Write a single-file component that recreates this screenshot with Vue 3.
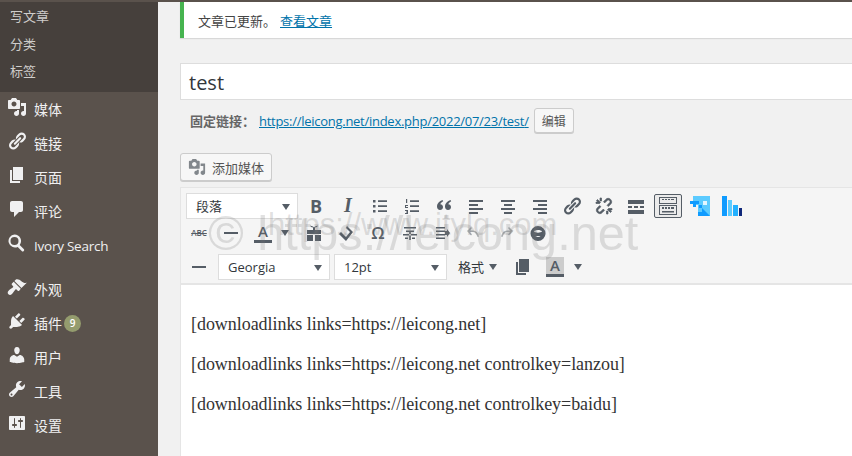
<script setup>
const subItems = ['写文章', '分类', '标签']

const menuTop = [
  { label: '媒体', d: 'M13 11V4c0-.55-.45-1-1-1h-1.67L9 1H5L3.67 3H2c-.55 0-1 .45-1 1v7c0 .55.45 1 1 1h10c.55 0 1-.45 1-1zM7 4.5c1.38 0 2.5 1.12 2.5 2.5S8.38 9.5 7 9.5 4.5 8.38 4.5 7 5.62 4.5 7 4.5zM14 6h5v10.5c0 1.38-1.12 2.5-2.5 2.5S14 17.88 14 16.5s1.12-2.5 2.5-2.5c.17 0 .34.02.5.05V9h-3V6zm-4 8.05V13h2v3.5c0 1.38-1.12 2.5-2.5 2.5S7 17.88 7 16.5 8.12 14 9.5 14c.17 0 .34.02.5.05z' },
  { label: '链接', d: 'M17.74 2.76c1.68 1.69 1.68 4.41 0 6.1l-1.53 1.52c-1.12 1.12-2.7 1.47-4.14 1.09l2.62-2.61.76-.77.76-.76c.84-.84.84-2.2 0-3.04-.84-.85-2.2-.85-3.04 0l-.77.76-3.38 3.38c-.37-1.44-.02-3.02 1.1-4.14l1.52-1.53c1.69-1.68 4.42-1.68 6.1 0zM8.59 13.43l5.34-5.34c.42-.42.42-1.1 0-1.52-.44-.43-1.13-.39-1.53 0l-5.33 5.34c-.42.42-.42 1.1 0 1.52.44.43 1.13.39 1.52 0zm-.76 2.29l4.14-4.15c.38 1.44.03 3.02-1.09 4.14l-1.52 1.53c-1.69 1.68-4.41 1.68-6.1 0-1.68-1.68-1.68-4.42 0-6.1l1.53-1.52c1.12-1.12 2.7-1.47 4.14-1.1l-4.14 4.15c-.85.84-.85 2.2 0 3.05.84.84 2.2.84 3.04 0z' },
  { label: '页面', d: 'M6 15V2h10v13H6zm-1 1h8v2H3V5h2v11z' },
  { label: '评论', d: 'M5 2h9c1.1 0 2 .9 2 2v7c0 1.1-.9 2-2 2h-2l-5 5v-5H5c-1.1 0-2-.9-2-2V4c0-1.1.9-2 2-2z' },
  { label: 'Ivory Search', cls: 'latin', d: 'M7.5 1.5a6.5 6.500 0 0 1 5.200 10.400l4 4a1.400 1.400 0 0 1-2 2l-4-4A6.500 6.500 0 1 1 7.500 1.500zM7.500 4a4 4 0 1 0 0 8 4 4 0 0 0 0-8z' }
]

const menuBottom = [
  { label: '外观', d: 'M14.48 11.06L7.41 3.99l1.5-1.5c.5-.56 2.3-.47 3.51.32 1.21.8 1.43 1.28 2.91 2.1 1.18.64 2.45 1.26 4.45.85zm-.71.71L6.7 4.7 4.93 6.47c-.39.39-.39 1.02 0 1.41l1.06 1.06c.39.39.39 1.03 0 1.42-.6.6-3.4 2.4-4.6 3.6-.9.9-.9 2.4 0 3.3s2.4.9 3.3 0c1.2-1.2 3-4 3.6-4.6.39-.39 1.03-.39 1.42 0l1.06 1.06c.39.39 1.02.39 1.41 0z' },
  { label: '插件', badge: 9, d: 'M13.11 4.36L9.87 7.6 8 5.73l3.24-3.24c.35-.34 1.05-.2 1.56.32.52.51.66 1.21.31 1.55zm-8 1.77l.91-1.12 9.01 9.01-1.19.84c-.71.71-2.63 1.16-3.82 1.16H6.14L4.9 17.26c-.59.59-1.54.59-2.12 0-.59-.58-.59-1.53 0-2.12l1.24-1.24v-3.88c0-1.13.4-3.19 1.09-3.89zm7.26 3.97l3.24-3.24c.34-.35 1.04-.21 1.55.31.52.51.66 1.21.31 1.55l-3.24 3.25z' },
  { label: '用户', d: 'M10 9.25c-2.27 0-2.73-3.44-2.73-3.44C7 4.02 7.82 2 9.97 2c2.16 0 2.98 2.02 2.71 3.81 0 0-.41 3.44-2.68 3.44zm0 2.57L12.72 10c2.39 0 4.52 2.33 4.52 4.53v2.49s-3.65 1.13-7.24 1.13c-3.65 0-7.24-1.13-7.24-1.13v-2.49c0-2.25 1.94-4.48 4.47-4.48z' },
  { label: '工具', d: 'M16.68 9.77c-1.34 1.34-3.3 1.67-4.95.99l-5.41 6.52c-.99.99-2.59.99-3.58 0s-.99-2.59 0-3.57l6.52-5.42c-.68-1.65-.35-3.61.99-4.95 1.28-1.28 3.12-1.62 4.72-1.06l-2.89 2.89 2.82 2.82 2.86-2.87c.53 1.58.18 3.39-1.08 4.65zM3.81 16.21c.4.39 1.04.39 1.43 0 .4-.4.4-1.04 0-1.43-.39-.4-1.03-.4-1.43 0-.39.39-.39 1.03 0 1.43z' },
  { label: '设置', d: 'M18 16V4c0-.55-.45-1-1-1H3c-.55 0-1 .45-1 1v12c0 .55.45 1 1 1h14c.55 0 1-.45 1-1zM8 11h1c.55 0 1 .45 1 1s-.45 1-1 1H8v1.5c0 .28-.22.5-.5.5s-.5-.22-.5-.5V13H6c-.55 0-1-.45-1-1s.45-1 1-1h1V5.5c0-.28.22-.5.5-.5s.5.22.5.5V11zm5-2h-1c-.55 0-1-.45-1-1s.45-1 1-1h1V5.5c0-.28.22-.5.5-.5s.5.22.5.5V7h1c.55 0 1 .45 1 1s-.45 1-1 1h-1v5.5c0 .28-.22.5-.5.5s-.5-.22-.5-.5V9z' }
]

const mediaIcon = menuTop[0].d
const linkIcon = menuTop[1].d

const row1 = [
  { text: 'B', cls: 'bold' },
  { text: 'I', cls: 'ital' },
  { d: 'M3 4h2.5v2.500H3zM8 4.300h9v1.800H8zM3 9h2.500v2.500H3zM8 9.300h9v1.800H8zM3 14h2.500v2.500H3zM8 14.300h9v1.800H8z' },
  { d: 'M4 3h1.200v4H4zM3 9h3v1H4v1h2v1H3zM3 14h3v4H3v-1h2v-.5H4v-1h1V15H3zM8 4.300h9v1.800H8zM8 9.300h9v1.800H8zM8 14.300h9v1.800H8z' },
  { d: 'M8.500 4C5.500 5 3 7.500 3 10.500 3 12.500 4.300 14 6 14s3-1.300 3-3-1.200-2.800-2.700-2.800c.3-1 1.200-2.200 2.900-3zM16.500 4C13.500 5 11 7.500 11 10.500c0 2 1.300 3.500 3 3.500s3-1.300 3-3-1.200-2.800-2.700-2.800c.3-1 1.200-2.200 2.900-3z' },
  { d: 'M3 4h14v2H3zM3 8h9v2H3zM3 12h14v2H3zM3 16h9v2H3z' },
  { d: 'M3 4h14v2H3zM6 8h8v2H6zM3 12h14v2H3zM6 16h8v2H6z' },
  { d: 'M3 4h14v2H3zM8 8h9v2H8zM3 12h14v2H3zM8 16h9v2H8z' },
  { d: linkIcon },
  { thick: true, d: 'M3.500 3.500l3 3-1 1-3-3zM6 2h1.500v3H6zM2 6h3v1.500H2zM16.500 16.500l-3-3 1-1 3 3zM12.500 15H14v3h-1.500zM15 12.500h3V14h-3zM12 3.200c1.200-1.200 3.200-1.200 4.600.2s1.400 3.400.2 4.600l-2.500 2.500-1.200-1.200 2.500-2.500c.6-.6.6-1.600-.1-2.300s-1.700-.7-2.300-.1L10.700 6.900 9.500 5.700zM8 16.800c-1.200 1.200-3.200 1.200-4.600-.2s-1.400-3.400-.2-4.600l2.500-2.500 1.200 1.200-2.500 2.500c-.6.6-.6 1.600.1 2.300s1.700.7 2.300.1l2.500-2.500 1.200 1.200z' },
  { d: 'M2 4h16v4H2zM2 10h4v2H2zM8 10h4v2H8zM14 10h4v2h-4zM2 14h16v4H2z' },
  { kbd: true },
  { blue: 'share' },
  { blue: 'bars' }
]

const row2 = [
  { text: 'ABC', cls: 'strike' },
  { d: 'M3 9h14v2H3z' },
  { text: 'A', cls: 'colorA', caret: true },
  { d: 'M3 7h6V4.500L7 4 6 2.500l3 1 1 1 1-1 3-1-1 1.500-2 .5V7h6v4H3zM3 12h6v6H3zM11 12h6v6h-6z' },
  { d: 'M11 3l6 6-7 9-7-7 2-2 5 5 4-5-4-4z' },
  { text: 'Ω', cls: 'omega' },
  { d: 'M4 4h12v1.500H4zM6 7.500h8V9H6zM3 11h14v1.500H3zM9.200 9h1.600v8H9.200zM5 14.500h3V16H5zM12 14.500h3V16h-3z' },
  { d: 'M4 4h9v1.500H4zM4 7.500h9V9H4zM4 11h9v1.500H4zM4 14.500h9V16H4zM13 8h2V6l3 4-3 4v-2h-2z' },
  { d: 'M3 8l4-4 1 1-2 2.500h3c3 0 5 2 6 6l-1.500.5c-1-3-2.500-5-4.500-5H6l2 2.500-1 1z', faint: true },
  { d: 'M17 8l-4-4-1 1 2 2.500h-3c-3 0-5 2-6 6l1.500.5c1-3 2.500-5 4.500-5H14l-2 2.500 1 1z', faint: true },
  { d: 'M10 3a7.500 7.500 0 1 1 0 15 7.500 7.500 0 0 1 0-15zM6 8.500c1 1.500 7 1.500 8 0-1-2-7-2-8 0zM7.500 13.500c1.200.6 3.800.6 5 0-.6-.8-4.400-.8-5 0z' }
]

const bodyLines = [
  '[downloadlinks links=https://leicong.net]',
  '[downloadlinks links=https://leicong.net controlkey=lanzou]',
  '[downloadlinks links=https://leicong.net controlkey=baidu]'
]
</script>

<template>
  <div class="page">
    <aside class="sidebar">
      <ul class="submenu">
        <li v-for="item in subItems" :key="item">{{ item }}</li>
      </ul>
      <ul class="menu">
        <li v-for="item in menuTop" :key="item.label" class="menu-item">
          <svg class="menu-icon" viewBox="0 0 20 20"><path :d="item.d" fill-rule="evenodd" /></svg>
          <span :class="item.cls">{{ item.label }}</span>
        </li>
      </ul>
      <ul class="menu second">
        <li v-for="item in menuBottom" :key="item.label" class="menu-item">
          <svg class="menu-icon" viewBox="0 0 20 20"><path :d="item.d" fill-rule="evenodd" /></svg>
          <span>{{ item.label }}</span>
          <b v-if="item.badge" class="badge">{{ item.badge }}</b>
        </li>
      </ul>
    </aside>

    <main class="content">
      <div class="notice">
        <span>文章已更新。</span>
        <a class="view-link">查看文章</a>
      </div>

      <div class="title-input">test</div>

      <div class="permalink">
        <strong>固定链接：</strong>
        <a class="slug-link">https://leicong.net/index.php/2022/07/23/<span>test</span>/</a>
        <button class="wp-btn edit-btn">编辑</button>
      </div>

      <button class="wp-btn media-btn">
        <svg viewBox="0 0 20 20"><path :d="mediaIcon" /></svg>
        添加媒体
      </button>

      <section class="editor">
        <div class="toolbar">
          <div class="tool-row">
            <div class="select format-select">段落<i class="caret"></i></div>
            <span v-for="(btn, i) in row1" :key="i" class="tool" :class="{ 'is-kbd': btn.kbd, thick: btn.thick }">
              <b v-if="btn.text" :class="btn.cls">{{ btn.text }}</b>
              <svg v-else-if="btn.d" viewBox="0 0 20 20"><path :d="btn.d" /></svg>
              <svg v-else-if="btn.kbd" viewBox="0 0 20 20" class="kbd-icon">
                <path d="M1 1h18v7H1zM2 2v5h16V2zM4 3h2v1H4zM7 3h2v1H7zM10 3h2v1h-2zM13 3h3v1h-3zM1 9h18v10H1zM2 10v8h16v-8zM4 11h2v2H4zM7 11h2v2H7zM10 11h2v2h-2zM13 11h3v2h-3zM4 15h12v1.500H4z" fill-rule="evenodd" />
              </svg>
              <svg v-else-if="btn.blue === 'share'" viewBox="0 0 20 20" class="blue-icon">
                <path fill="#5ccbff" d="M3 0h17v20H8V9H3z" />
                <path fill="#0f9bff" d="M0 5h9v3H6v3H3V8H0zM9 9h3v3H9zM12 12l8 8H8v-4h4z" />
                <path fill="#e4f6ff" d="M13 5h4v4h-4z" />
              </svg>
              <svg v-else viewBox="0 0 20 20" class="blue-icon">
                <path fill="#0f9bff" d="M0 0h5v20H0z" />
                <path fill="#5ccbff" d="M6 4h4v16H6z" />
                <path fill="#22b0ff" d="M11 9h5v11h-5z" />
                <path fill="#10287a" d="M17 12h3v8h-3z" />
              </svg>
            </span>
          </div>

          <div class="tool-row second-row">
            <template v-for="(btn, i) in row2" :key="i">
              <span class="tool" :class="{ faint: btn.faint }">
                <b v-if="btn.text" :class="btn.cls">{{ btn.text }}</b>
                <svg v-else viewBox="0 0 20 20"><path :d="btn.d" fill-rule="evenodd" /></svg>
              </span>
              <i v-if="btn.caret" class="caret floating"></i>
            </template>
          </div>

          <div class="tool-row third-row">
            <span class="tool"><svg viewBox="0 0 20 20"><path d="M3 9h14v2H3z" /></svg></span>
            <div class="select font-select">Georgia<i class="caret"></i></div>
            <div class="select size-select">12pt<i class="caret"></i></div>
            <span class="format-menu">格式<i class="caret"></i></span>
            <span class="tool paste">
              <svg viewBox="0 0 20 20"><path d="M6 15V2h10v13H6zm-1 1h8v2H3V5h2v11z" /></svg>
            </span>
            <span class="tool bg-a"><b>A</b></span>
            <i class="caret last"></i>
          </div>
        </div>

        <div class="body-text">
          <p v-for="line in bodyLines" :key="line">{{ line }}</p>
        </div>
      </section>
    </main>

    <div class="watermark">
      <span class="mark-big">© https://leicong.net</span>
      <span class="mark-small">https://www.itylq.com</span>
    </div>
  </div>
</template>

<style>
html, body {
  margin: 0;
  background: #f1f1f1;
}
</style>

<style scoped>
.page {
  position: relative;
  display: flex;
  width: 852px;
  height: 456px;
  overflow: hidden;
  box-sizing: border-box;
  border-top: 2px solid #5a524c;
  font-family: "Open Sans", "Noto Sans CJK SC", sans-serif;
  font-size: 13px;
  color: #444;
  background: #f1f1f1;
}

ul {
  list-style: none;
  margin: 0;
  padding: 0;
}

.sidebar {
  flex: 0 0 158px;
  background: #5a524c;
  color: #f0f0f1;
}

.submenu {
  height: 90px;
  box-sizing: border-box;
  padding-top: 1px;
  background: #46403c;
  color: #cfcdcb;
}

.submenu li {
  height: 27.5px;
  line-height: 27px;
  padding-left: 10px;
}

.menu-item {
  display: flex;
  align-items: center;
  height: 34px;
  font-size: 14px;
}

.menu-item span {
  margin-left: 7px;
}

.menu-item .latin {
  font-size: 13.5px;
  letter-spacing: -0.25px;
  padding-top: 1px;
}

.menu-icon {
  width: 20px;
  height: 20px;
  margin-left: 7px;
  margin-top: -5px;
  fill: #f0f0f1;
}

.second {
  margin-top: 10px;
}

.badge {
  display: inline-block;
  width: 17px;
  height: 17px;
  margin-left: 2px;
  border-radius: 50%;
  background: #949c6e;
  color: #fff;
  font-size: 10px;
  font-weight: 600;
  line-height: 17px;
  text-align: center;
}

.content {
  flex: 1;
  min-width: 0;
  padding-left: 22px;
}

.notice {
  display: flex;
  align-items: center;
  gap: 4px;
  height: 36px;
  box-sizing: border-box;
  padding-left: 14px;
  border-left: 4px solid #46b450;
  background: #fff;
  box-shadow: 0 1px 1px rgba(0, 0, 0, 0.1);
  color: #444;
}

.view-link {
  color: #0073aa;
  text-decoration: underline;
}

.title-input {
  height: 37px;
  box-sizing: border-box;
  margin-top: 25px;
  padding-left: 8px;
  border: 1px solid #ddd;
  border-right: 0;
  background: #fff;
  color: #32373c;
  font-size: 20px;
  line-height: 37px;
}

.permalink {
  display: flex;
  align-items: center;
  height: 25px;
  margin-top: 8px;
  padding-left: 10px;
  color: #666;
}

.permalink strong {
  font-weight: 600;
  width: 69px;
  flex: none;
}

.slug-link {
  color: #0073aa;
  text-decoration: underline;
  white-space: nowrap;
  letter-spacing: -0.27px;
}

.wp-btn {
  box-sizing: border-box;
  border: 1px solid #ccc;
  border-radius: 3px;
  background: #f7f7f7;
  box-shadow: 0 1px 0 #ccc;
  color: #555;
  font-family: inherit;
  font-size: 13px;
}

.edit-btn {
  width: 40px;
  height: 25px;
  margin-left: 5px;
  padding: 0;
  font-size: 12px;
}

.media-btn {
  display: flex;
  align-items: center;
  gap: 6px;
  width: 92px;
  height: 28px;
  margin-top: 20px;
  padding: 0 0 0 7px;
}

.media-btn svg {
  width: 18px;
  height: 18px;
  fill: #82878c;
}

.editor {
  margin-top: 6px;
  border-left: 1px solid #e5e5e5;
  background: #fff;
  height: 270px;
}

.toolbar {
  height: 98px;
  box-sizing: border-box;
  padding: 4px 0 0 5px;
  border-top: 1px solid #e5e5e5;
  border-bottom: 2px solid #e5e5e5;
  background: #f5f5f5;
}

.tool-row {
  display: flex;
  align-items: center;
  height: 27px;
}

.second-row {
  margin-left: -5px;
  padding-left: 2px;
}

.third-row {
  margin-left: -5px;
  padding-left: 2px;
  margin-top: 7px;
}

.select {
  position: relative;
  box-sizing: border-box;
  height: 26px;
  border: 1px solid #ddd;
  background: #fff;
  line-height: 24px;
  padding-left: 9px;
  color: #32373c;
}

.format-select {
  width: 112px;
  margin-right: 2px;
  font-size: 13px;
}

.font-select {
  width: 112px;
  margin-left: 3px;
}

.size-select {
  width: 113px;
  margin-left: 4px;
}

.caret {
  display: inline-block;
  width: 0;
  height: 0;
  border-left: 4px solid transparent;
  border-right: 4px solid transparent;
  border-top: 6px solid #555d66;
}

.select .caret {
  position: absolute;
  right: 7px;
  top: 10px;
}

.caret.floating {
  margin-left: 2px;
  margin-right: 9px;
  flex: none;
}

.caret.last {
  margin-left: 3px;
}

.tool {
  display: flex;
  flex: 0 0 32px;
  align-items: center;
  justify-content: center;
  height: 26px;
  color: #555d66;
}

.tool svg {
  width: 20px;
  height: 20px;
  fill: #555d66;
}

.tool.thick svg {
  stroke: #555d66;
  stroke-width: 0.7;
}

.tool.faint svg {
  fill: #a9adb0;
}

.bold {
  font-size: 18px;
  font-weight: 700;
}

.ital {
  font-family: "Liberation Serif", serif;
  font-size: 20px;
  font-style: italic;
  font-weight: 700;
}

.strike {
  font-size: 8px;
  font-weight: 600;
  text-decoration: line-through;
}

.colorA {
  padding: 0 4px;
  font-size: 15px;
  font-weight: 600;
  line-height: 17px;
  border-bottom: 3px solid #555d66;
}

.omega {
  font-size: 17px;
  font-weight: 600;
}

.is-kbd {
  flex: 0 0 28px;
  height: 24px;
  margin: 0 2px;
  box-sizing: border-box;
  border: 1px solid #555d66;
  border-radius: 2px;
  background: #ebebeb;
}

.kbd-icon {
  width: 18px;
  height: 18px;
}

.tool svg.blue-icon {
  width: 20px;
  height: 20px;
}

.format-menu {
  display: flex;
  align-items: center;
  gap: 5px;
  margin-left: 11px;
  color: #32373c;
}

.paste {
  margin-left: 10px;
}

.bg-a b {
  padding: 0 4px;
  background: #ccc;
  border-bottom: 3px solid #555d66;
  font-size: 15px;
  font-weight: 600;
  line-height: 17px;
}

.body-text {
  padding: 19px 10px 0;
  font-family: "Liberation Serif", serif;
  font-size: 18px;
  letter-spacing: -0.05px;
  color: #333;
}

.body-text p {
  margin: 0;
  height: 40px;
  line-height: 40px;
  white-space: nowrap;
}

.watermark {
  position: absolute;
  inset: 0;
  pointer-events: none;
  font-family: "Liberation Sans", sans-serif;
  color: rgba(120, 120, 120, 0.22);
  white-space: nowrap;
}

.mark-big {
  position: absolute;
  left: 208px;
  top: 203px;
  font-size: 48.6px;
}

.mark-small {
  position: absolute;
  left: 268px;
  top: 205px;
  font-size: 31px;
}
</style>
